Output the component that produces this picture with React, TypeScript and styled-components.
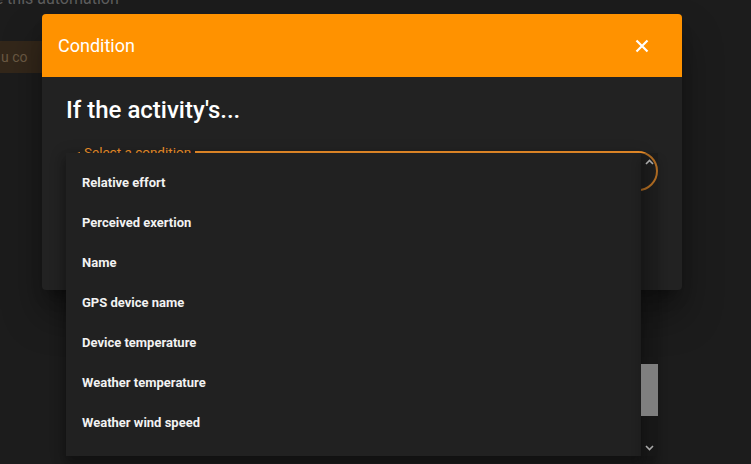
import React from 'react'
import styled, { createGlobalStyle } from 'styled-components'

const GlobalStyle = createGlobalStyle`
  html, body {
    margin: 0;
    padding: 0;
    background: #1c1c1c;
    font-family: Roboto, "Liberation Sans", Arial, sans-serif;
    overflow: hidden;
  }
`

const Page = styled.div`
  position: relative;
  width: 751px;
  height: 464px;
  overflow: hidden;
  background: #1c1c1c;
`

const Behind = styled.div`
  display: flex;
  flex-direction: column;
  align-items: flex-start;
  gap: 32px;
  margin-top: -11px;
`

const BehindText = styled.div`
  margin-left: -24px;
  font-size: 16px;
  line-height: 20px;
  color: #5e5e5e;
  white-space: nowrap;
`

const BehindButton = styled.div`
  width: 42px;
  height: 32px;
  overflow: hidden;
  display: flex;
  align-items: center;
  padding-left: 1px;
  box-sizing: border-box;
  background: #33271a;
  color: #6b5a44;
  font-size: 14px;
  white-space: nowrap;
`

const Dialog = styled.div`
  position: absolute;
  left: 42px;
  top: 14px;
  width: 640px;
  height: 276px;
  display: flex;
  flex-direction: column;
  background: #222222;
  border-radius: 4px;
  box-shadow: 0 11px 15px -7px rgba(0, 0, 0, 0.4), 0 24px 38px 3px rgba(0, 0, 0, 0.3);
`

const Header = styled.div`
  height: 63px;
  flex: none;
  display: flex;
  align-items: center;
  justify-content: space-between;
  padding: 0 33px 0 16px;
  background: #ff9200;
  border-radius: 4px 4px 0 0;
  color: #ffffff;
  font-size: 18px;
`

const CloseButton = styled.button`
  border: 0;
  background: none;
  padding: 0;
  display: flex;
  cursor: pointer;
`

const Body = styled.div`
  padding: 16px 24px 0 24px;
  display: flex;
  flex-direction: column;
`

const Title = styled.div`
  font-size: 24px;
  font-weight: 500;
  color: #ffffff;
  line-height: 34px;
`

const SelectField = styled.div`
  position: relative;
  margin-top: 24px;
  height: 40px;
  width: 592px;
  box-sizing: border-box;
  border: 2px solid #f0912a;
  border-radius: 20px;
`

const Legend = styled.span`
  position: absolute;
  left: 12px;
  top: -8px;
  padding: 0 4px;
  background: #222222;
  color: #f0912a;
  font-size: 13.5px;
  line-height: 14px;
`

const Menu = styled.div`
  position: absolute;
  left: -2px;
  top: 0;
  width: 592px;
  height: 303px;
  display: flex;
`

const Options = styled.ul`
  flex: 1;
  list-style: none;
  margin: 0;
  padding: 9px 0 0 0;
  background: #212121;
  box-shadow: 0 8px 10px 1px rgba(0, 0, 0, 0.25), 0 3px 14px 2px rgba(0, 0, 0, 0.2);
`

const Option = styled.li`
  height: 40px;
  display: flex;
  align-items: center;
  padding-left: 16px;
  font-size: 13px;
  font-weight: 700;
  color: #f2f2f2;
`

const Scrollbar = styled.div`
  width: 17px;
  display: flex;
  flex-direction: column;
  background: rgba(16, 16, 16, 0.3);
  box-shadow: 0 8px 10px 1px rgba(0, 0, 0, 0.2);
`

const ScrollArrow = styled.div`
  height: 17px;
  display: flex;
  align-items: center;
  justify-content: center;
  flex: none;
`

const Track = styled.div`
  flex: 1;
  display: flex;
  flex-direction: column;
`

const Thumb = styled.div<{ $top: number; $size: number }>`
  margin-top: ${({ $top }) => $top}px;
  height: ${({ $size }) => $size}px;
  background: #7f7f7f;
`

const options = [
  'Relative effort',
  'Perceived exertion',
  'Name',
  'GPS device name',
  'Device temperature',
  'Weather temperature',
  'Weather wind speed',
]

const Chevron = ({ up }: { up?: boolean }) => (
  <svg width="9" height="6" viewBox="0 0 9 6">
    <path
      d={up ? 'M1 5 L4.5 1.5 L8 5' : 'M1 1 L4.5 4.5 L8 1'}
      fill="none"
      stroke="#a8a8a8"
      strokeWidth="1.6"
    />
  </svg>
)

export default function App() {
  return (
    <Page>
      <GlobalStyle />
      <Behind>
        <BehindText>Use this automation</BehindText>
        <BehindButton>u co</BehindButton>
      </Behind>

      <Dialog>
        <Header>
          <span>Condition</span>
          <CloseButton aria-label="close">
            <svg width="14" height="14" viewBox="0 0 14 14">
              <path d="M1.5 1.5 L12.5 12.5 M12.5 1.5 L1.5 12.5" stroke="#ffffff" strokeWidth="2.2" />
            </svg>
          </CloseButton>
        </Header>
        <Body>
          <Title>If the activity's...</Title>
          <SelectField>
            <Legend>Select a condition</Legend>
            <Menu>
              <Options>
                {options.map((o) => (
                  <Option key={o}>{o}</Option>
                ))}
              </Options>
              <Scrollbar>
                <ScrollArrow>
                  <Chevron up />
                </ScrollArrow>
                <Track>
                  <Thumb $top={194} $size={52} />
                </Track>
                <ScrollArrow>
                  <Chevron />
                </ScrollArrow>
              </Scrollbar>
            </Menu>
          </SelectField>
        </Body>
      </Dialog>
    </Page>
  )
}
